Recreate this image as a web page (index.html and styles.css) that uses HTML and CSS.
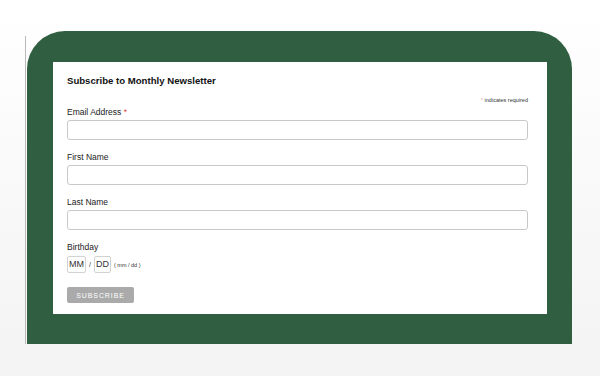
FILE: index.html
```html
<!DOCTYPE html>
<html lang="en">
<head>
  <meta charset="UTF-8">
  <meta name="viewport" content="width=device-width, initial-scale=1.0">
  <title>Subscribe to Monthly Newsletter</title>
  <link rel="stylesheet" href="styles.css">
</head>
<body>
  <div class="stage">
    <div class="rule"></div>
    <div class="panel">
      <form class="card">
        <h2>Subscribe to Monthly Newsletter</h2>
        <div class="required"><span class="asterisk">*</span> indicates required</div>

        <div class="field first">
          <label for="email">Email Address <span class="asterisk">*</span></label>
          <input type="email" id="email">
        </div>

        <div class="field">
          <label for="fname">First Name</label>
          <input type="text" id="fname">
        </div>

        <div class="field">
          <label for="lname">Last Name</label>
          <input type="text" id="lname">
        </div>

        <div class="field">
          <label>Birthday</label>
          <div class="date">
            <span class="box">MM</span>
            <span class="slash">/</span>
            <span class="box">DD</span>
            <span class="hint">( mm / dd )</span>
          </div>
        </div>

        <button type="button">SUBSCRIBE</button>
      </form>
    </div>
  </div>
</body>
</html>
```

FILE: styles.css
```css
html, body {
  height: 100%;
}

body {
  margin: 0;
  font-family: "Liberation Sans", Arial, sans-serif;
  background: linear-gradient(#ffffff, #f3f3f3);
  color: #222;
}

.stage {
  display: flex;
  padding: 31px 0 0 25px;
}

.rule {
  width: 1px;
  margin: 5px 1px 0 0;
  background-color: #b8b8b8;
}

.panel {
  width: 545px;
  height: 313px;
  box-sizing: border-box;
  padding: 31px 25px 30px 26px;
  background-color: #2f5f40;
  border-radius: 38px 38px 0 0;
}

.card {
  height: 252px;
  box-sizing: border-box;
  padding: 12px 19px 0 14px;
  background-color: white;
}

h2 {
  margin: 0;
  font-size: 9.6px;
  line-height: 13px;
  font-weight: bold;
  color: #111;
}

.required {
  margin-top: 9px;
  text-align: right;
  font-size: 5.5px;
  line-height: 8px;
  color: #333;
}

.required .asterisk {
  color: #f0a0a0;
}

.asterisk {
  color: #e0453c;
}

.field {
  margin-top: 12px;
}

.field.first {
  margin-top: 3px;
}

label {
  display: block;
  font-size: 8.5px;
  line-height: 11px;
  margin-bottom: 2px;
}

input {
  display: block;
  width: 100%;
  height: 20px;
  box-sizing: border-box;
  margin: 0;
  border: 1px solid #c9c9c9;
  border-radius: 3px;
  background: white;
}

.date {
  display: flex;
  align-items: center;
  margin-top: 3px;
  font-size: 9px;
  color: #333;
}

.box {
  height: 15px;
  padding: 0 1px;
  line-height: 15px;
  border: 1px solid #d2d2d2;
  border-radius: 2px;
}

.slash {
  margin: 0 3px;
  font-size: 7px;
}

.hint {
  margin-left: 3px;
  font-size: 5.5px;
}

button {
  margin-top: 14px;
  width: 67px;
  height: 16px;
  padding: 0;
  border: none;
  border-radius: 2px;
  background-color: #aaaaaa;
  color: white;
  font-family: "Liberation Sans", Arial, sans-serif;
  font-size: 7px;
  letter-spacing: 0.9px;
}
```
